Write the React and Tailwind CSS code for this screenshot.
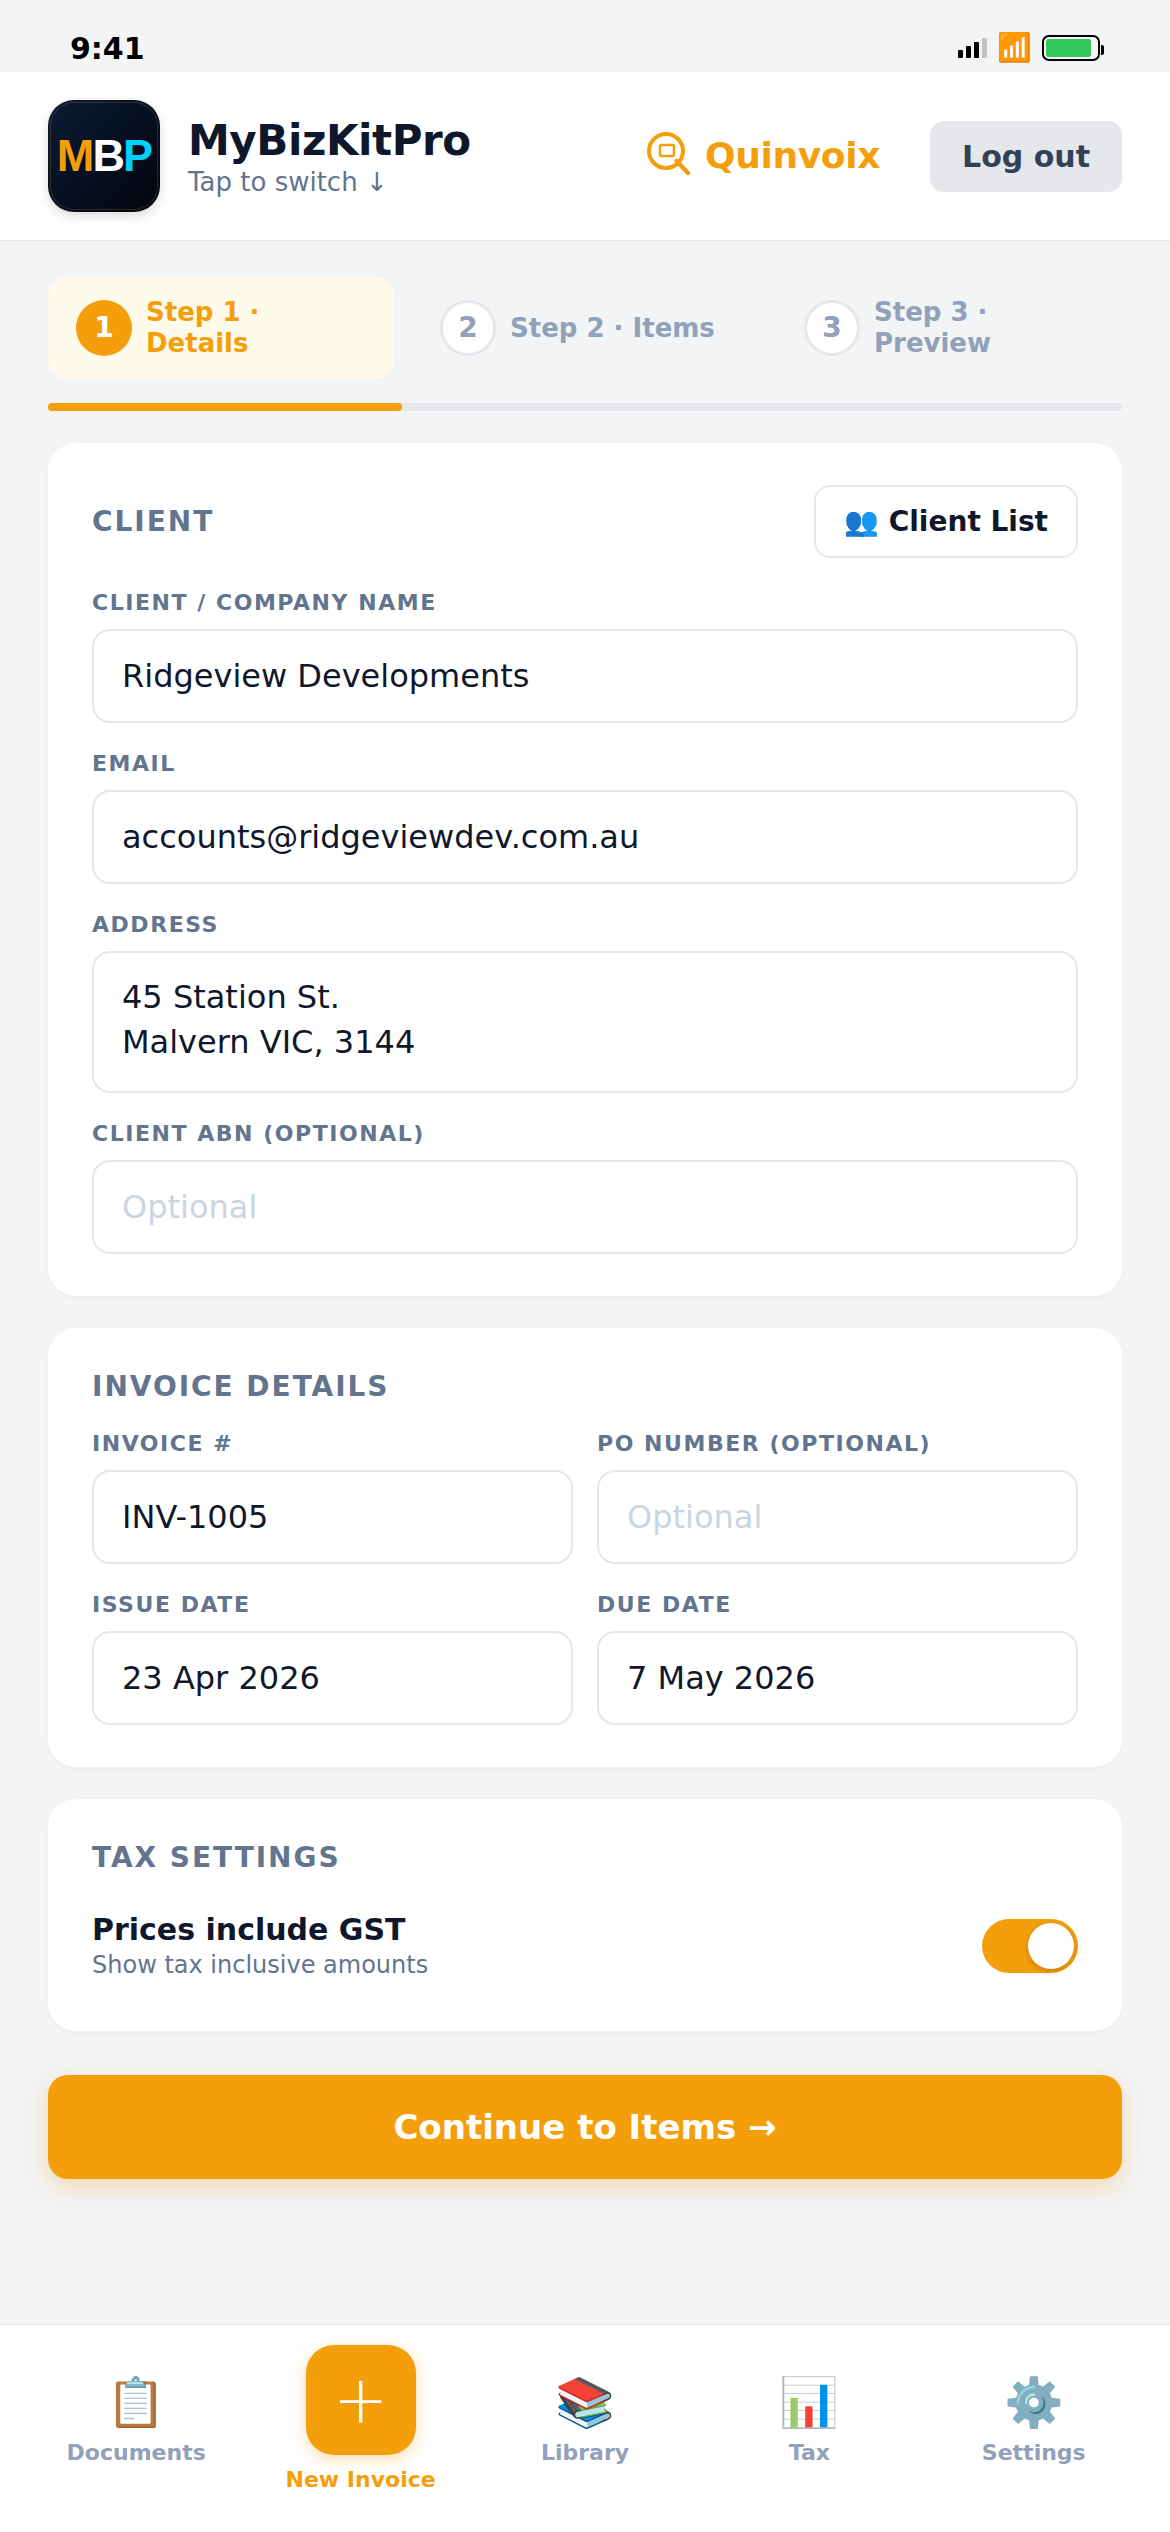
const inputClass = "h-[94px] w-full rounded-[18px] border-2 border-gray-200 bg-white px-7 text-[32px] leading-[45px] text-slate-900 outline-none placeholder:text-slate-300";

function Field({ label, value, placeholder, multiline }) {
  return (
    <label className="flex flex-col gap-[13px]">
      <span className="text-[22px] font-bold uppercase leading-[26px] tracking-[1.54px] text-slate-500">{label}</span>
      {multiline ? (
        <div className="h-[142px] whitespace-pre-line rounded-[18px] border-2 border-gray-200 bg-white px-7 pt-[22px] text-[32px] leading-[45px] text-slate-900">{value}</div>
      ) : (
        <input className={inputClass} defaultValue={value} placeholder={placeholder} />
      )}
    </label>
  );
}

function Card({ children, className }) {
  return <section className={`rounded-[28px] bg-white px-11 shadow-[0_2px_4px_rgba(0,0,0,0.03)] ${className}`}>{children}</section>;
}

function CardTitle({ children }) {
  return <h2 className="text-[28px] font-bold uppercase leading-[33px] tracking-[1.96px] text-slate-500">{children}</h2>;
}

function Step({ number, label, active }) {
  return (
    <div className={`flex h-[102px] w-[346px] items-center gap-[14px] rounded-[20px] px-7 ${active ? "bg-amber-50 text-[#f59e0b]" : "text-slate-400"}`}>
      <span className={`flex size-14 shrink-0 items-center justify-center rounded-full text-[28px] font-bold ${active ? "bg-[#f59e0b] text-white" : "border-[3px] border-gray-200 bg-white"}`}>{number}</span>
      <span className="text-[26px] font-bold leading-[31px]">{label}</span>
    </div>
  );
}

function StatusBar() {
  return (
    <div className="flex h-[72px] items-end justify-between px-[70px] pb-[6px]">
      <span className="text-[30px] font-bold leading-[35px] text-black">9:41</span>
      <div className="mb-px flex h-[35px] items-center gap-[10px]">
        <div className="flex h-5 items-end gap-[3px]">
          <i className="h-2 w-[5px] rounded-[1px] bg-black" />
          <i className="h-3 w-[5px] rounded-[1px] bg-black" />
          <i className="h-4 w-[5px] rounded-[1px] bg-black" />
          <i className="h-5 w-[5px] rounded-[1px] bg-black/20" />
        </div>
        <span className="text-[28px] leading-[33px]">📶</span>
        <div className="relative h-[26px] w-[58px] rounded-[7px] border-2 border-black p-[2px]">
          <div className="h-[18px] w-[45px] rounded-[3px] bg-[#34c759]" />
          <i className="absolute -right-[6px] top-2 h-[10px] w-[3px] rounded-r-[2px] bg-black" />
        </div>
      </div>
    </div>
  );
}

function Header() {
  return (
    <header className="flex h-[169px] items-center border-b border-gray-200 bg-white px-12">
      <div className="relative flex size-28 items-center justify-center rounded-[26px] bg-linear-to-br from-[#0b1b36] to-[#03060e] font-['Liberation_Sans'] text-[45px] font-bold tracking-[-1.8px] shadow-[0_4px_12px_rgba(0,0,0,0.15)]">
        <i className="absolute inset-[2px] rounded-[24px] border border-[#f59e0b]/20" />
        <span className="text-[#f59e0b]">M</span><span className="text-white">B</span><span className="text-[#00cfff]">P</span>
      </div>
      <div className="ml-7 pt-[2px]">
        <h1 className="text-[42px] font-bold leading-[49px] tracking-[-0.42px] text-slate-900">MyBizKitPro</h1>
        <p className="mt-[2px] text-[26px] leading-[31px] text-slate-500">Tap to switch ↓</p>
      </div>
      <div className="ml-auto flex items-center gap-3 text-[#f59e0b]">
        <svg className="-mt-1 size-12" viewBox="0 0 48 48" fill="none" stroke="currentColor" strokeLinecap="round">
          <circle cx="21" cy="21" r="17" strokeWidth="4" />
          <rect x="15" y="15" width="14" height="11" rx="1.5" strokeWidth="2.5" />
          <path d="M31.5 31L43 43" strokeWidth="4.5" />
        </svg>
        <span className="text-[36px] font-bold leading-[42px] tracking-[-0.36px]">Quinvoix</span>
      </div>
      <button className="ml-[50px] h-[71px] w-48 rounded-[14px] bg-gray-200 text-[30px] font-bold text-slate-700">Log out</button>
    </header>
  );
}

function NavItem({ icon, label }) {
  return (
    <div className="flex w-[224.4px] flex-col items-center pt-[47px]">
      <span className="text-[48px] leading-[60px]">{icon}</span>
      <span className="mt-2 text-[22px] font-bold leading-[26px] text-slate-400">{label}</span>
    </div>
  );
}

export default function App() {
  return (
    <div className="flex h-[2532px] w-[1170px] flex-col overflow-hidden bg-gray-100 font-['DejaVu_Sans',sans-serif]">
      <StatusBar />
      <Header />
      <main className="flex-1 px-12 pt-9">
        <div className="flex gap-[18px]">
          <Step number="1" label="Step 1 · Details" active />
          <Step number="2" label="Step 2 · Items" />
          <Step number="3" label="Step 3 · Preview" />
        </div>
        <div className="mt-6 h-2 rounded-full bg-gray-200">
          <div className="h-2 w-[33%] rounded-full bg-[#f59e0b]" />
        </div>

        <Card className="mt-8 h-[853px] pt-[42px]">
          <div className="flex items-center justify-between">
            <CardTitle>Client</CardTitle>
            <button className="h-[73px] w-[264px] rounded-[16px] border-2 border-gray-200 text-[28px] font-bold text-slate-900">👥 Client List</button>
          </div>
          <div className="mt-8 flex flex-col gap-7">
            <Field label="Client / Company Name" value="Ridgeview Developments" />
            <Field label="Email" value="accounts@ridgeviewdev.com.au" />
            <Field label="Address" value={"45 Station St.\nMalvern VIC, 3144"} multiline />
            <Field label="Client ABN (Optional)" placeholder="Optional" />
          </div>
        </Card>

        <Card className="mt-8 h-[439px] pt-[42px]">
          <CardTitle>Invoice Details</CardTitle>
          <div className="mt-7 grid grid-cols-2 gap-x-6 gap-y-7">
            <Field label="Invoice #" value="INV-1005" />
            <Field label="PO Number (Optional)" placeholder="Optional" />
            <Field label="Issue Date" value="23 Apr 2026" />
            <Field label="Due Date" value="7 May 2026" />
          </div>
        </Card>

        <Card className="mt-8 h-[232px] pt-[42px]">
          <CardTitle>Tax Settings</CardTitle>
          <div className="mt-[38px] flex items-center justify-between">
            <div>
              <p className="text-[30px] font-bold leading-[35px] text-slate-900">Prices include GST</p>
              <p className="mt-1 text-[24px] leading-[28px] text-slate-500">Show tax inclusive amounts</p>
            </div>
            <div className="flex h-[54px] w-24 items-center justify-end rounded-full bg-[#f59e0b] p-1">
              <i className="size-[46px] rounded-full bg-white shadow-[0_2px_6px_rgba(0,0,0,0.2)]" />
            </div>
          </div>
        </Card>

        <button className="mt-11 h-[104px] w-full rounded-[20px] bg-[#f59e0b] text-[34px] font-bold text-white shadow-[0_8px_24px_rgba(245,158,11,0.3)]">Continue to Items →</button>
      </main>
      <nav className="flex h-[208px] border-t border-gray-200 bg-white px-6">
        <NavItem icon="📋" label="Documents" />
        <div className="flex w-[224.4px] flex-col items-center pt-5">
          <div className="flex size-[110px] items-center justify-center rounded-[28px] bg-[#f59e0b] text-[66px] font-light leading-none text-white shadow-[0_4px_16px_rgba(245,158,11,0.35)]">+</div>
          <span className="mt-3 text-[22px] font-bold leading-[26px] text-[#f59e0b]">New Invoice</span>
        </div>
        <NavItem icon="📚" label="Library" />
        <NavItem icon="📊" label="Tax" />
        <NavItem icon="⚙️" label="Settings" />
      </nav>
    </div>
  );
}
